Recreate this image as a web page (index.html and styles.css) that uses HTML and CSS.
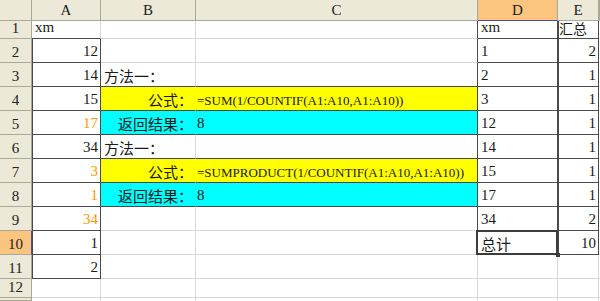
FILE: index.html
```html
<!DOCTYPE html>
<html>
<head>
<meta charset="utf-8">
<link rel="stylesheet" href="styles.css">
</head>
<body>
<div class="sheet">
  <!-- header row -->
  <div class="h corner"></div>
  <div class="h">A</div>
  <div class="h">B</div>
  <div class="h">C</div>
  <div class="h sel-col">D</div>
  <div class="h">E</div>
  <div class="h"></div>

  <!-- row 1 -->
  <div class="h rh">1</div>
  <div class="c bb">xm</div>
  <div class="c"></div>
  <div class="c br"></div>
  <div class="c bb br">xm</div>
  <div class="c bb br bl snug"><span class="zh">汇总</span></div>
  <div class="c"></div>

  <!-- row 2 -->
  <div class="h rh">2</div>
  <div class="c r bb br bl">12</div>
  <div class="c"></div>
  <div class="c br"></div>
  <div class="c bb br">1</div>
  <div class="c r bb br bl">2</div>
  <div class="c"></div>

  <!-- row 3 -->
  <div class="h rh">3</div>
  <div class="c r bb br bl">14</div>
  <div class="c bb"><span class="zh">方法一：</span></div>
  <div class="c bb br"></div>
  <div class="c bb br">2</div>
  <div class="c r bb br bl">1</div>
  <div class="c"></div>

  <!-- row 4 -->
  <div class="h rh">4</div>
  <div class="c r bb br bl">15</div>
  <div class="c r bb yel"><span class="zh">公式：</span></div>
  <div class="c bb br yel tight"><span class="fx">=SUM(1/COUNTIF(A1:A10,A1:A10))</span></div>
  <div class="c bb br">3</div>
  <div class="c r bb br bl">1</div>
  <div class="c"></div>

  <!-- row 5 -->
  <div class="h rh">5</div>
  <div class="c r bb br bl org">17</div>
  <div class="c r bb cyan"><span class="zh">返回结果：</span></div>
  <div class="c bb br cyan tight">8</div>
  <div class="c bb br">12</div>
  <div class="c r bb br bl">1</div>
  <div class="c"></div>

  <!-- row 6 -->
  <div class="h rh">6</div>
  <div class="c r bb br bl">34</div>
  <div class="c bb"><span class="zh">方法一：</span></div>
  <div class="c bb br"></div>
  <div class="c bb br">14</div>
  <div class="c r bb br bl">1</div>
  <div class="c"></div>

  <!-- row 7 -->
  <div class="h rh">7</div>
  <div class="c r bb br bl org">3</div>
  <div class="c r bb yel"><span class="zh">公式：</span></div>
  <div class="c bb br yel tight"><span class="fx">=SUMPRODUCT(1/COUNTIF(A1:A10,A1:A10))</span></div>
  <div class="c bb br">15</div>
  <div class="c r bb br bl">1</div>
  <div class="c"></div>

  <!-- row 8 -->
  <div class="h rh">8</div>
  <div class="c r bb br bl org">1</div>
  <div class="c r bb cyan"><span class="zh">返回结果：</span></div>
  <div class="c bb br cyan tight">8</div>
  <div class="c bb br">17</div>
  <div class="c r bb br bl">1</div>
  <div class="c"></div>

  <!-- row 9 -->
  <div class="h rh">9</div>
  <div class="c r bb br bl org">34</div>
  <div class="c"></div>
  <div class="c br"></div>
  <div class="c bb br">34</div>
  <div class="c r bb br bl">2</div>
  <div class="c"></div>

  <!-- row 10 -->
  <div class="h rh sel-row">10</div>
  <div class="c r bb br bl">1</div>
  <div class="c"></div>
  <div class="c br"></div>
  <div class="c bb br active"><span class="zh">总计</span></div>
  <div class="c r bb br bl">10</div>
  <div class="c"></div>

  <!-- row 11 -->
  <div class="h rh">11</div>
  <div class="c r bb br bl">2</div>
  <div class="c"></div>
  <div class="c"></div>
  <div class="c"></div>
  <div class="c"></div>
  <div class="c"></div>

  <!-- row 12 -->
  <div class="h rh">12</div>
  <div class="c"></div>
  <div class="c"></div>
  <div class="c"></div>
  <div class="c"></div>
  <div class="c"></div>
  <div class="c"></div>

  <!-- row 13 (partial) -->
  <div class="h rh"></div>
  <div class="c"></div>
  <div class="c"></div>
  <div class="c"></div>
  <div class="c"></div>
  <div class="c"></div>
  <div class="c"></div>
</div>
</body>
</html>
```

FILE: styles.css
```css
html, body {
  margin: 0;
  padding: 0;
  background: #fff;
}

body {
  width: 600px;
  height: 301px;
  overflow: hidden;
  font-family: "Liberation Serif", "Noto Sans CJK SC", serif;
  font-size: 15px;
  color: #1a1a1a;
}

.sheet {
  display: grid;
  grid-template-columns: 32px 69px 95px 282px 80px 41px 1px;
  grid-template-rows: 21px 18px repeat(10, 24px) 19px 3px;
}

.c, .h {
  box-sizing: border-box;
  min-width: 0;
  white-space: nowrap;
  line-height: 1;
  display: flex;
  border-right: 1px solid #d6d6d6;
  border-bottom: 1px solid #d6d6d6;
}

.c {
  align-items: flex-end;
  padding: 0 2px 3px 3px;
  position: relative;
}

.c.r {
  justify-content: flex-end;
}

.c.snug {
  padding-left: 1px;
  padding-right: 0;
}

.snug .zh {
  font-size: 14px;
  letter-spacing: 0;
}

.zh {
  font-family: "Noto Sans CJK SC", sans-serif;
  font-size: 15px;
  line-height: 1;
  color: #1a1a1a;
}

.fx {
  font-size: 13px;
}

.h {
  background: #ece9d8;
  border-right-color: #aca899;
  border-bottom-color: #aca899;
  justify-content: center;
  align-items: flex-end;
  padding-bottom: 2px;
  font-size: 15px;
  color: #222;
}

.h.sel-col {
  background: #fcc57f;
  border-bottom-color: #4b4bb4;
}

.h.sel-row {
  background: #fcc57f;
  border-right-color: #4b4bb4;
}

.bb {
  border-bottom-color: #4a4a4a;
}

.br {
  border-right-color: #4a4a4a;
}

.bl {
  box-shadow: inset 1px 0 0 #4a4a4a;
}

.yel {
  background: #ffff00;
}

.cyan {
  background: #00ffff;
}

.c.r.yel {
  border-right-color: #ffff00;
}

.c.r.cyan {
  border-right-color: #00ffff;
}

.tight {
  padding-left: 1px;
}

.org {
  color: #ff9900;
}

.active::after {
  content: "";
  position: absolute;
  left: -2px;
  top: -1px;
  right: -1px;
  bottom: -1px;
  border: 2px solid #3c3c3c;
  pointer-events: none;
}

.active::before {
  content: "";
  position: absolute;
  right: -3px;
  bottom: -3px;
  width: 4px;
  height: 4px;
  background: #3c3c3c;
  z-index: 1;
}
```
